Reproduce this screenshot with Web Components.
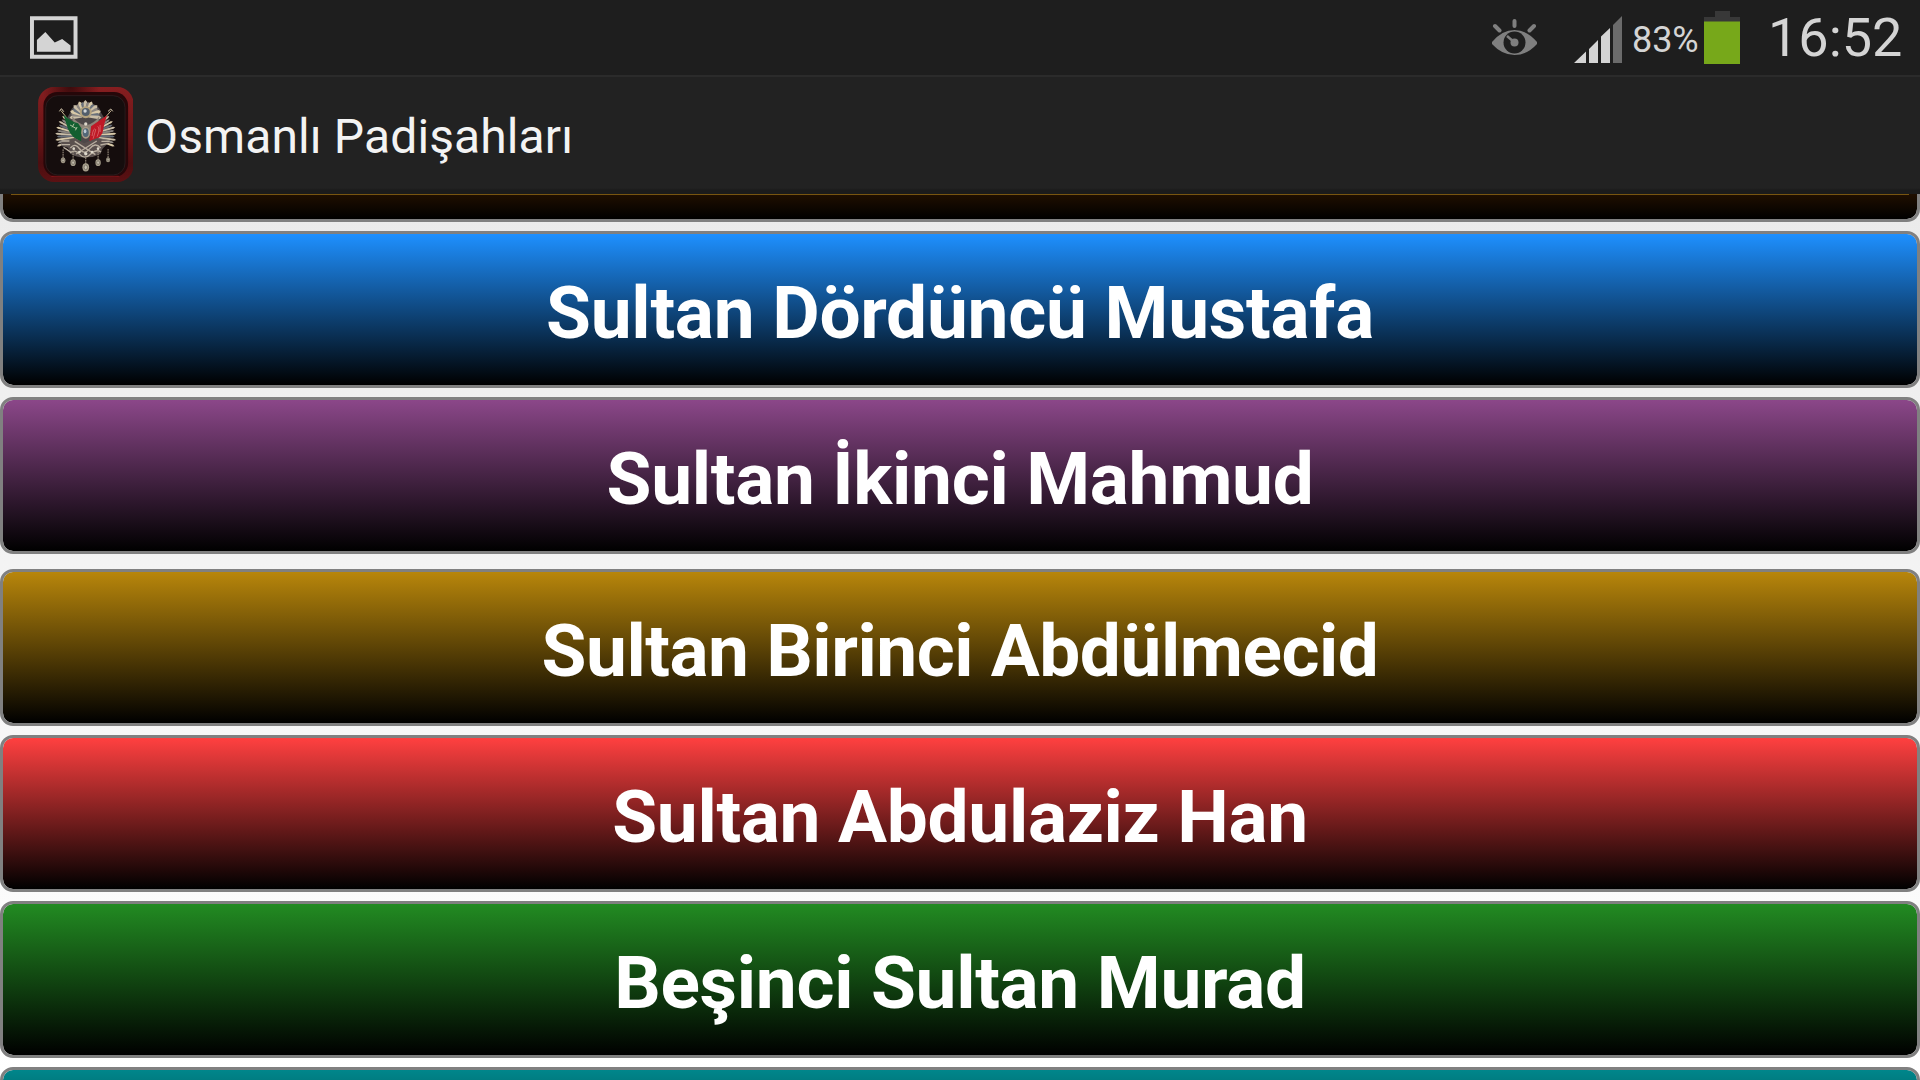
<!DOCTYPE html>
<html lang="tr">
<head>
    <meta charset="UTF-8">
    <title>Osmanlı Padişahları</title>
    <style>
        body {
            margin: 0;
            font-family: Roboto, sans-serif;
            background: #fff;
        }
    </style>
</head>
<body>
    <phone-screen>
        <status-bar slot="top" battery="83%" time="16:52"></status-bar>
        <app-bar slot="top"><app-logo slot="icon"></app-logo>Osmanlı Padişahları</app-bar>
        <sultan-list>
            <sultan-button class="cut" style="--from: #200f00; --height: 28px"></sultan-button>
            <sultan-button style="--from: #1e90ff; --spacing: -.26px">Sultan Dördüncü Mustafa</sultan-button>
            <sultan-button style="--from: #8b4789; --after: 15px">Sultan İkinci Mahmud</sultan-button>
            <sultan-button style="--from: #b8860b; --spacing: -.48px">Sultan Birinci Abdülmecid</sultan-button>
            <sultan-button style="--from: #ff4040">Sultan Abdulaziz Han</sultan-button>
            <sultan-button style="--from: #228b22">Beşinci Sultan Murad</sultan-button>
            <sultan-button style="--from: #00868b"></sultan-button>
        </sultan-list>
    </phone-screen>

    <script>
        class PhoneScreen extends HTMLElement {
            constructor() {
                super();
                this.attachShadow({mode: 'open'}).innerHTML = `
                    <style>
                        :host {
                            display: flex;
                            flex-direction: column;
                            width: 1920px;
                            height: 1080px;
                            overflow: hidden;
                            background: linear-gradient(#e6e6e6, #fff);
                        }
                    </style>
                    <slot name="top"></slot>
                    <slot></slot>
                `;
            }
        }

        class StatusBar extends HTMLElement {
            constructor() {
                super();
                this.attachShadow({mode: 'open'}).innerHTML = `
                    <style>
                        :host {
                            display: flex;
                            flex: none;
                            box-sizing: border-box;
                            height: 75px;
                            padding: 0 18px 0 30px;
                            background: #1e1e1e;
                            color: #d4d4d4;
                            line-height: 1;
                            white-space: nowrap;
                        }
                        svg { display: block; flex: none; }
                        .picture { margin-top: 16px; }
                        .eye { margin: 19px 0 0 auto; }
                        .signal { margin: 16px 0 0 37px; }
                        .level { width: 65px; margin: 22px 0 0 10px; font-size: 36px; letter-spacing: -.1px; }
                        .battery { margin: 11px 0 0 7px; }
                        .time { width: 134px; margin: 11px 0 0 28px; font-size: 54px; }
                    </style>
                    <svg class="picture" width="47.500" height="43" viewBox="0 0 48 43">
                        <path d="M2 2H46V41H2Z" fill="none" stroke="#d4d4d4" stroke-width="4"/>
                        <path d="M7 24L15.500 16L25 26.500L32.500 23L41 29.500V36H7Z" fill="#d4d4d4"/>
                    </svg>
                    <svg class="eye" width="45" height="36" viewBox="0 0 45 36">
                        <g fill="none" stroke="#7f7f7f" stroke-width="4" stroke-linecap="round">
                            <path d="M22.500 2V7M3 7L7.500 11.500M42 7L37.500 11.500"/>
                        </g>
                        <path d="M0 23Q10 11 22.500 11Q35 11 45 23V25Q35 36 22.500 36Q10 36 0 25Z" fill="#7f7f7f"/>
                        <circle cx="22.500" cy="23.500" r="11" fill="#1e1e1e"/>
                        <circle cx="22.500" cy="23.500" r="4" fill="#7f7f7f"/>
                        <path d="M15 17L22 23" stroke="#7f7f7f" stroke-width="2.500"/>
                    </svg>
                    <svg class="signal" width="48" height="47" viewBox="0 0 48 47">
                        <path d="M0 47L12 35.500V47ZM15 47V33L24 24V47ZM27 47V20.500L36 12V47Z" fill="#d4d4d4"/>
                        <path d="M39 47V9L48 0V47Z" fill="#6b6b6b"/>
                    </svg>
                    <span class="level"></span>
                    <svg class="battery" width="36" height="53" viewBox="0 0 36 53">
                        <path d="M11 0H26V6H36V11H0V6H11Z" fill="#383838"/>
                        <path d="M0 10.500H36V53H0Z" fill="#77a81a"/>
                    </svg>
                    <span class="time"></span>
                `;
            }

            connectedCallback() {
                this.shadowRoot.querySelector('.level').textContent = this.getAttribute('battery');
                this.shadowRoot.querySelector('.time').textContent = this.getAttribute('time');
            }
        }

        class AppBar extends HTMLElement {
            constructor() {
                super();
                this.attachShadow({mode: 'open'}).innerHTML = `
                    <style>
                        :host {
                            display: flex;
                            flex: none;
                            align-items: flex-start;
                            box-sizing: border-box;
                            height: 119px;
                            padding: 10px 0 0 37.5px;
                            border-top: 2px solid #2b2b2b;
                            background: linear-gradient(#222 0 111px, #1b1b1b 113px);
                            color: #f3f3f3;
                        }
                        .title {
                            margin: 20px 0 0 12px;
                            font-size: 48px;
                            line-height: 60px;
                            letter-spacing: .11px;
                            white-space: nowrap;
                        }
                    </style>
                    <slot name="icon"></slot>
                    <span class="title"><slot></slot></span>
                `;
            }
        }

        class AppLogo extends HTMLElement {
            constructor() {
                super();
                // Sunburst of feathers and blades round a centre point
                const rays = (cx, cy, from, to, step, inner, outer, width) => {
                    const colors = ['#c9bda6', '#8b8580', '#d8c9a8', '#69707a'];
                    let out = '';
                    for (let a = from, i = 0; a <= to; a += step, i++) {
                        const r = outer - (i % 2) * 5;
                        out += `<path transform="translate(${cx} ${cy}) rotate(${a})" d="M${-width / 3} ${-inner}L${-width / 2} ${-r + 6}L0 ${-r}L${width / 2} ${-r + 6}L${width / 3} ${-inner}Z" fill="${colors[i % 4]}"/>`;
                    }
                    return out;
                };
                const pendants = [[97, 241, 7], [127, 248, 8], [165, 262, 10], [202, 248, 8], [232, 239, 6]];

                this.attachShadow({mode: 'open'}).innerHTML = `
                    <style>
                        :host { display: block; width: 95.5px; height: 95px; }
                        svg { display: block; }
                    </style>
                    <svg width="95.500" height="95" viewBox="22 21 286 285">
                        <defs>
                            <linearGradient id="frame" x1="0" y1="0" x2="0" y2="1">
                                <stop offset="0" stop-color="#861e20"/>
                                <stop offset=".5" stop-color="#6a1517"/>
                                <stop offset=".8" stop-color="#4c0e10"/>
                                <stop offset="1" stop-color="#5c1113"/>
                            </linearGradient>
                            <radialGradient id="glow" cx=".34" cy="0" r=".3">
                                <stop offset="0" stop-color="#3c0b0c"/>
                                <stop offset="1" stop-color="#3c0b0c" stop-opacity="0"/>
                            </radialGradient>
                        </defs>
                        <rect x="22" y="21" width="286" height="285" rx="48" fill="url(#frame)"/>
                        <rect x="22" y="21" width="286" height="285" rx="48" fill="url(#glow)"/>
                        <rect x="38" y="36" width="254" height="255" rx="42" fill="#260709"/>
                        <path d="M62 289H264" stroke="#a51b20" stroke-width="2"/>
                        <rect x="45" y="47" width="238" height="238" rx="36" fill="#150d0d" stroke="#302426" stroke-width="2"/>
                        <path d="M118 98Q124 70 164 68Q206 70 211 98L236 140L240 180L212 210L165 228L120 210L88 182L94 140Z" fill="#4d4748"/>
                        ${rays(165, 167, -110, -50, 6, 25, 92, 6)}
                        ${rays(165, 167, 50, 110, 6, 25, 92, 6)}
                        ${rays(164, 108, -96, 96, 12, 10, 48, 11)}
                        <path d="M124 108Q140 132 165 136Q190 132 206 108L200 145L165 170L128 146Z" fill="#8d8378"/>
                        <circle cx="165" cy="97" r="18" fill="#b4a27d"/>
                        <circle cx="165" cy="96" r="12" fill="#535e6b"/>
                        <circle cx="163" cy="93" r="5" fill="#d1d5d8"/>
                        <path d="M91 92L151 168M241 92L178 166" stroke="#c7b590" stroke-width="3"/>
                        <path d="M86 94L92 86L99 95M232 94L240 87L246 94" fill="none" stroke="#ddd0b4" stroke-width="3"/>
                        <path d="M98 104Q121 124 142 130L152 145L151 184Q124 176 112 148Z" fill="#125f30"/>
                        <path d="M118 135L137 146M124 142L130 131M134 151L139 141" stroke="#b0c4a2" stroke-width="3"/>
                        <path d="M229 106L204 123L181 139L176 184Q201 184 215 160Q219 133 229 106Z" fill="#bf1926"/>
                        <path d="M184 168Q188 140 195 149L187 176M201 139Q209 146 199 170M208 135V156" fill="none" stroke="#e07a7d" stroke-width="2"/>
                        <path d="M93 184L132 174L160 190L199 174L238 184L216 204L209 222Q188 233 165 232Q138 233 120 222L112 203L91 198Z" fill="#5a504e"/>
                        <g fill="none" stroke="#b9aea0" stroke-width="4">
                            <path d="M92 183H116M92 194H118M98 202Q111 209 120 217"/>
                            <path d="M119 204Q133 187 147 207T177 206T210 204"/>
                            <path d="M118 219Q132 206 147 223T179 223T211 216"/>
                            <path d="M132 184L194 224M198 183L136 222"/>
                            <path d="M212 184H237M209 195L233 190"/>
                        </g>
                        <g fill="#ddd7ca">
                            <circle cx="129" cy="206" r="4"/><circle cx="146" cy="216" r="4"/>
                            <circle cx="165" cy="221" r="5"/><circle cx="184" cy="216" r="4"/>
                            <circle cx="202" cy="206" r="4"/><circle cx="165" cy="132" r="5"/>
                        </g>
                        <ellipse cx="165" cy="158" rx="13" ry="18" fill="#a99c87"/>
                        <ellipse cx="165" cy="158" rx="9" ry="13" fill="#526777"/>
                        <ellipse cx="163" cy="154" rx="4" ry="6" fill="#bccbd4"/>
                        ${pendants.map(([x, y, r]) => `
                            <path d="M${x} ${y - r - 26}V${y - r}" stroke="#a39787" stroke-width="3" stroke-dasharray="5 2"/>
                            <ellipse cx="${x}" cy="${y}" rx="${r}" ry="${r * 1.25}" fill="#a69e8b"/>
                            <ellipse cx="${x}" cy="${y}" rx="${r * .5}" ry="${r * .7}" fill="#c9c2b0" stroke="#686058" stroke-width="2"/>
                        `).join('')}
                    </svg>
                `;
            }
        }

        class SultanList extends HTMLElement {
            constructor() {
                super();
                this.attachShadow({mode: 'open'}).innerHTML = `
                    <style>
                        :host {
                            display: flex;
                            flex: 1;
                            flex-direction: column;
                            min-height: 0;
                            overflow: hidden;
                        }
                    </style>
                    <slot></slot>
                `;
            }
        }

        class SultanButton extends HTMLElement {
            constructor() {
                super();
                this.attachShadow({mode: 'open'}).innerHTML = `
                    <style>
                        :host {
                            display: flex;
                            flex: none;
                            justify-content: center;
                            box-sizing: border-box;
                            height: var(--height, 157px);
                            margin-bottom: var(--after, 9px);
                            padding-top: 34px;
                            border: 3px solid #808080;
                            border-radius: 13px;
                            background: linear-gradient(var(--from), #000) padding-box;
                            color: #fff;
                            font-size: 73px;
                            font-weight: 700;
                            line-height: 90px;
                            letter-spacing: var(--spacing, -.31px);
                            white-space: nowrap;
                        }
                        /* Row scrolled halfway under the app bar */
                        :host(.cut) {
                            padding: 0;
                            border-top: 0;
                            border-radius: 0 0 13px 13px;
                        }
                        .edge { display: none; }
                        :host(.cut) .edge {
                            display: block;
                            flex: 1;
                            height: 1px;
                            margin: 0 8px;
                            background: #785510;
                        }
                    </style>
                    <div class="edge"></div>
                    <slot></slot>
                `;
            }
        }

        customElements.define('phone-screen', PhoneScreen);
        customElements.define('status-bar', StatusBar);
        customElements.define('app-bar', AppBar);
        customElements.define('app-logo', AppLogo);
        customElements.define('sultan-list', SultanList);
        customElements.define('sultan-button', SultanButton);
    </script>
</body>
</html>
